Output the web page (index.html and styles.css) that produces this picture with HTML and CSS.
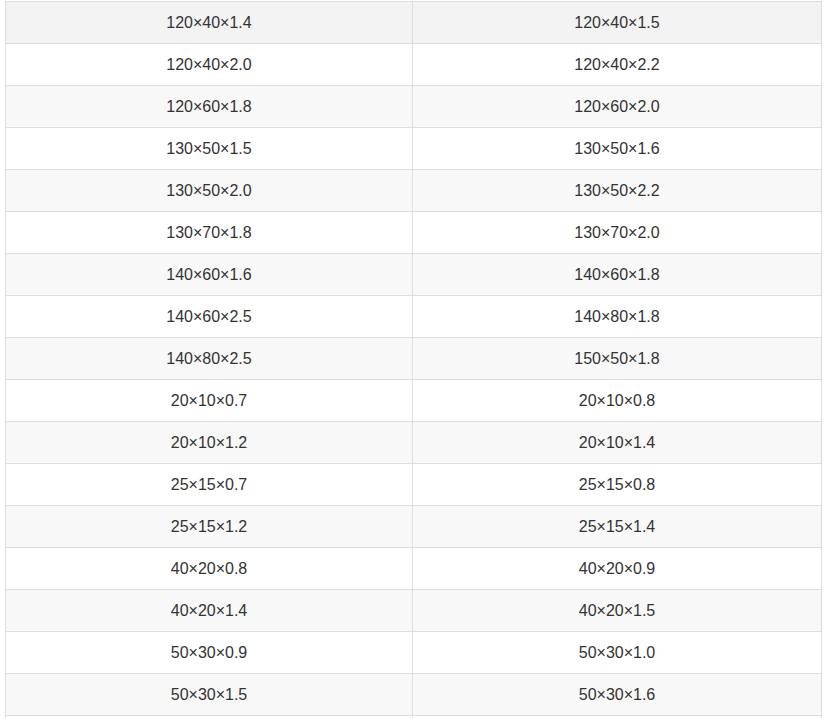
FILE: index.html
```html
<!DOCTYPE html>
<html>
<head>
<meta charset="utf-8">
<link rel="stylesheet" href="styles.css">
</head>
<body>
<table class="spec">
<colgroup><col class="c1"><col class="c2"></colgroup>
<tbody>
<tr class="first"><td>120×40×1.4</td><td>120×40×1.5</td></tr>
<tr><td>120×40×2.0</td><td>120×40×2.2</td></tr>
<tr class="alt"><td>120×60×1.8</td><td>120×60×2.0</td></tr>
<tr><td>130×50×1.5</td><td>130×50×1.6</td></tr>
<tr class="alt"><td>130×50×2.0</td><td>130×50×2.2</td></tr>
<tr><td>130×70×1.8</td><td>130×70×2.0</td></tr>
<tr class="alt"><td>140×60×1.6</td><td>140×60×1.8</td></tr>
<tr><td>140×60×2.5</td><td>140×80×1.8</td></tr>
<tr class="alt"><td>140×80×2.5</td><td>150×50×1.8</td></tr>
<tr><td>20×10×0.7</td><td>20×10×0.8</td></tr>
<tr class="alt"><td>20×10×1.2</td><td>20×10×1.4</td></tr>
<tr><td>25×15×0.7</td><td>25×15×0.8</td></tr>
<tr class="alt"><td>25×15×1.2</td><td>25×15×1.4</td></tr>
<tr><td>40×20×0.8</td><td>40×20×0.9</td></tr>
<tr class="alt"><td>40×20×1.4</td><td>40×20×1.5</td></tr>
<tr><td>50×30×0.9</td><td>50×30×1.0</td></tr>
<tr class="alt"><td>50×30×1.5</td><td>50×30×1.6</td></tr>
<tr class="tail"><td></td><td></td></tr>
</tbody>
</table>
</body>
</html>
```
FILE: styles.css
```css
html, body {
  margin: 0;
  padding: 0;
  background: #fff;
  overflow: hidden;
}
body {
  padding: 1px 11px 0 5px;
  font-family: "Liberation Sans", Arial, sans-serif;
  font-size: 16px;
  line-height: 18px;
  color: #333;
}
.spec {
  width: 816px;
  border-collapse: collapse;
  table-layout: fixed;
}
.spec .c1 {
  width: 407px;
}
.spec .c2 {
  width: 409px;
}
.spec td {
  border: 1px solid #ddd;
  height: 40px;
  padding: 1px 0 0;
  text-align: center;
  vertical-align: middle;
}
.spec tr.first td {
  background: #f3f3f3;
}
.spec tr.alt td {
  background: #f8f8f8;
}
```
